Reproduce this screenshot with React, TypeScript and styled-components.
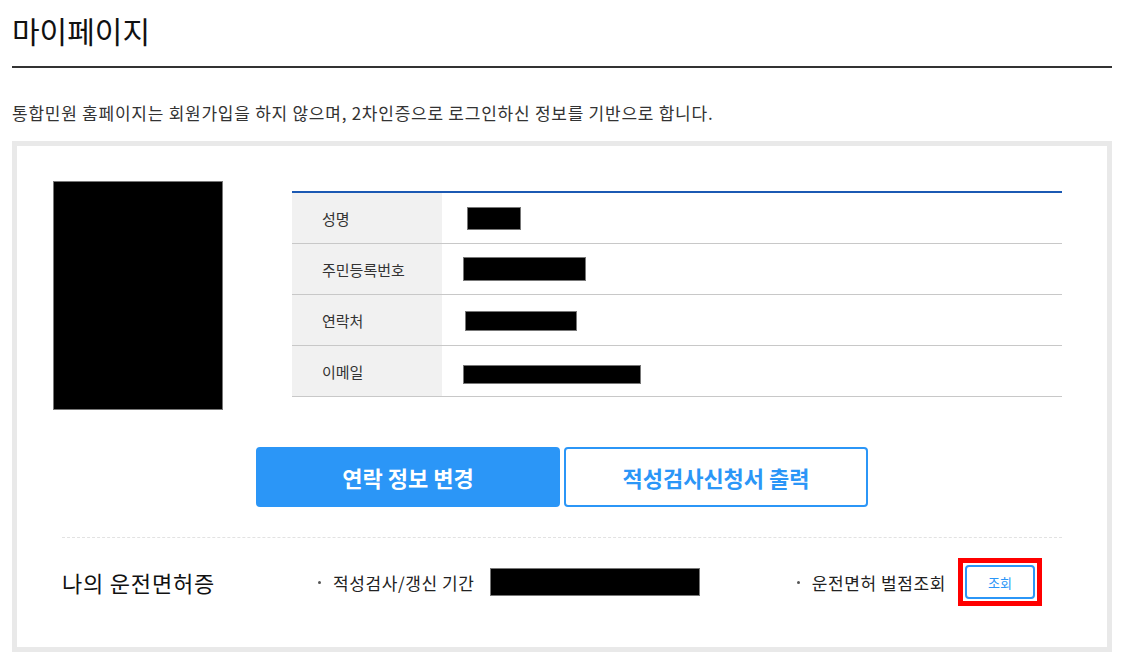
import styled, { createGlobalStyle } from 'styled-components';

const GlobalStyle = createGlobalStyle`
  html, body {
    margin: 0;
    padding: 0;
    background: #ffffff;
  }
  body {
    font-family: "Noto Sans CJK KR", "Noto Sans", sans-serif;
    color: #222;
  }
  * {
    box-sizing: border-box;
  }
`;

const Page = styled.div`
  width: 1112px;
  padding-left: 12px;
`;

const Header = styled.div`
  height: 68px;
  display: flex;
  align-items: center;
  padding-bottom: 6px;
  border-bottom: 2px solid #333;
`;

const Title = styled.h1`
  margin: 0;
  font-size: 30px;
  font-weight: 400;
  color: #111;
`;

const Notice = styled.p`
  margin: 33px 0 16px;
  font-size: 17px;
  line-height: 24px;
  letter-spacing: 0.75px;
  color: #333;
`;

const Box = styled.div`
  border: 5px solid #e9e9e9;
  padding: 35px 45px 0 36px;
`;

const TopSection = styled.div`
  display: flex;
  gap: 69px;
`;

const Photo = styled.div`
  width: 170px;
  height: 229px;
  background: #000;
  border: 1px solid #777;
  flex-shrink: 0;
`;

const InfoTable = styled.div`
  flex: 1;
  margin-top: 10px;
  border-top: 2px solid #1b59b3;
`;

const Row = styled.div`
  display: flex;
  height: 51px;
  border-bottom: 1px solid #c8c8c8;
`;

const Label = styled.div`
  width: 150px;
  background: #f1f1f1;
  display: flex;
  align-items: center;
  padding-left: 30px;
  font-size: 15px;
  color: #333;
`;

const Value = styled.div`
  flex: 1;
  display: flex;
  align-items: center;
`;

const Redact = styled.div<{ $w: number; $h: number; $left?: number; $dy?: number }>`
  width: ${(p) => p.$w}px;
  height: ${(p) => p.$h}px;
  margin-left: ${(p) => p.$left ?? 0}px;
  margin-top: ${(p) => p.$dy ?? 0}px;
  background: #000;
  border: 1px solid #777;
  flex-shrink: 0;
`;

const ButtonRow = styled.div`
  display: flex;
  justify-content: center;
  gap: 4px;
  margin-top: 37px;
  padding-left: 9px;
`;

const ActionButton = styled.button<{ $primary?: boolean }>`
  width: 304px;
  height: 60px;
  border-radius: 4px;
  border: 2px solid #2b96f7;
  background: ${(p) => (p.$primary ? '#2b96f7' : '#ffffff')};
  color: ${(p) => (p.$primary ? '#ffffff' : '#2b96f7')};
  font-family: inherit;
  font-size: 22px;
  font-weight: 700;
  cursor: pointer;
`;

const LicenseSection = styled.div`
  margin-top: 30px;
  margin-left: 9px;
  border-top: 1px dashed #e2e2e2;
`;

const LicenseRow = styled.div`
  display: flex;
  align-items: center;
  padding: 20px 20px 41px 0;
`;

const LicenseTitle = styled.div`
  width: 256px;
  font-size: 22px;
  letter-spacing: 0.8px;
  color: #111;
`;

const Item = styled.div`
  display: flex;
  align-items: center;
  font-size: 17px;
  letter-spacing: 0.6px;
  color: #222;
`;

const Dot = styled.span`
  width: 3px;
  height: 3px;
  border-radius: 50%;
  background: #555;
  margin-right: 12px;
`;

const Spacer = styled.div`
  flex: 1;
`;

const Highlight = styled.div`
  border: 5px solid #ff0000;
  padding: 2px;
  margin-left: 12px;
`;

const SmallButton = styled.button`
  width: 70px;
  height: 34px;
  border: 2px solid #2b96f7;
  border-radius: 4px;
  background: #fff;
  color: #2b96f7;
  font-family: inherit;
  font-size: 13px;
  cursor: pointer;
`;

const rows = [
  { label: '성명', w: 54, h: 23, left: 25, dy: 0 },
  { label: '주민등록번호', w: 123, h: 24, left: 21, dy: 0 },
  { label: '연락처', w: 112, h: 20, left: 23, dy: 2 },
  { label: '이메일', w: 178, h: 19, left: 21, dy: 7 },
];

const App = () => {
  return (
    <>
      <GlobalStyle />
      <Page>
        <Header>
          <Title>마이페이지</Title>
        </Header>
        <Notice>통합민원 홈페이지는 회원가입을 하지 않으며, 2차인증으로 로그인하신 정보를 기반으로 합니다.</Notice>
        <Box>
          <TopSection>
            <Photo />
            <InfoTable>
              {rows.map((r) => (
                <Row key={r.label}>
                  <Label>{r.label}</Label>
                  <Value>
                    <Redact $w={r.w} $h={r.h} $left={r.left} $dy={r.dy} />
                  </Value>
                </Row>
              ))}
            </InfoTable>
          </TopSection>
          <ButtonRow>
            <ActionButton $primary>연락 정보 변경</ActionButton>
            <ActionButton>적성검사신청서 출력</ActionButton>
          </ButtonRow>
          <LicenseSection>
            <LicenseRow>
              <LicenseTitle>나의 운전면허증</LicenseTitle>
              <Item>
                <Dot />
                적성검사/갱신 기간
                <Redact $w={210} $h={28} $left={15} />
              </Item>
              <Spacer />
              <Item>
                <Dot />
                운전면허 벌점조회
                <Highlight>
                  <SmallButton>조회</SmallButton>
                </Highlight>
              </Item>
            </LicenseRow>
          </LicenseSection>
        </Box>
      </Page>
    </>
  );
};

export default App;
